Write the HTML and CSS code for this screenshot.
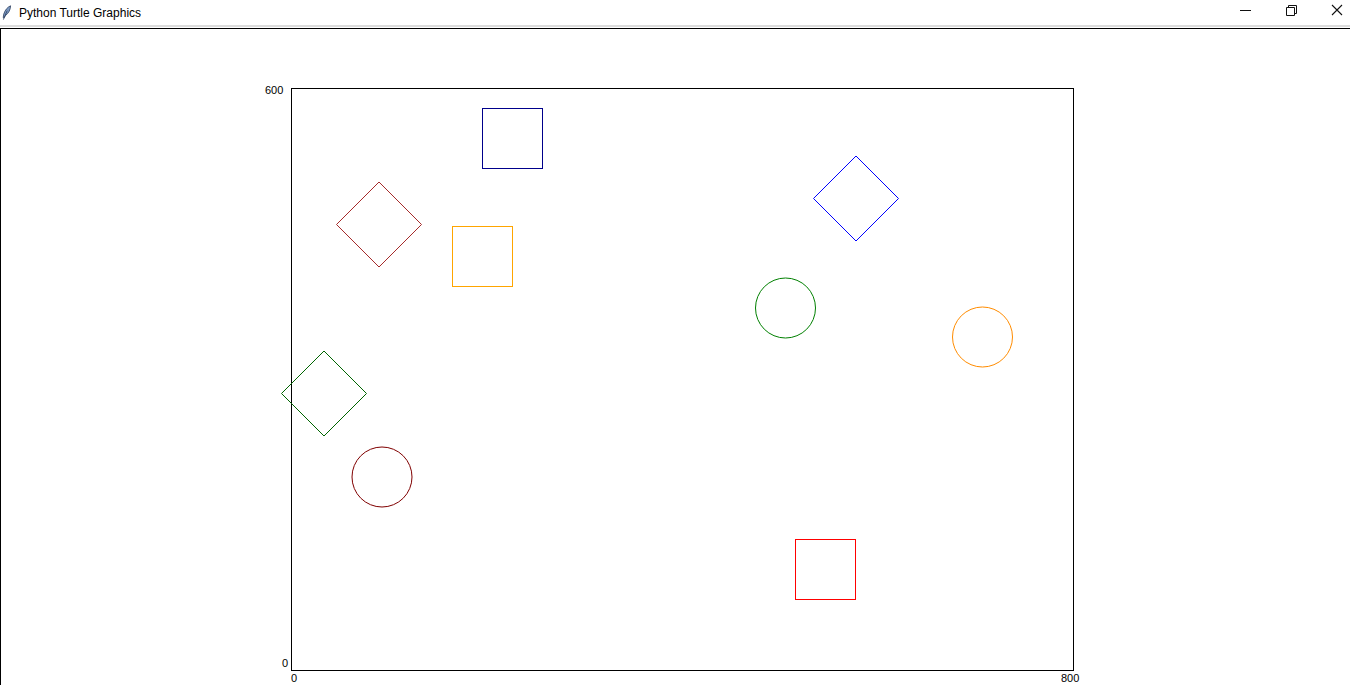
FILE: index.html
```html
<html>
<head>
	<link rel="stylesheet" href="styles.css">
	<title>Python Turtle Graphics</title>
</head>
<body>
	<div id="window">
		<div id="titlebar">
			<svg id="feather" width="10" height="16" viewBox="0 0 10 16">
				<path d="M8.6 0.8 C5.6 2 3 5 1.8 9 L1.2 12.6 L1.8 13 L3.6 10.4 C6.4 8.4 8.4 5 8.6 0.8 Z" fill="#7d9ac4" stroke="#2a3c5c" stroke-width="0.8"/>
				<path d="M1.4 14.6 L5.2 5.6" stroke="#2a3c5c" stroke-width="0.8"/>
			</svg>
			<span id="title">Python Turtle Graphics</span>
			<div id="controls">
				<svg class="ctl" width="46" height="25" viewBox="0 0 46 25"><path d="M29 10.5 H40" stroke="#111" stroke-width="1"/></svg>
				<svg class="ctl" width="46" height="25" viewBox="0 0 46 25">
					<path d="M29.5 7.5 H37.5 V15.5 H29.5 Z" fill="none" stroke="#111"/>
					<path d="M31.5 7.5 V5.5 H39.5 V13.5 H37.5" fill="none" stroke="#111"/>
				</svg>
				<svg class="ctl" width="46" height="25" viewBox="0 0 46 25"><path d="M29 5 L39 15 M39 5 L29 15" stroke="#111" stroke-width="1.1"/></svg>
			</div>
		</div>
		<div id="canvas">
			<svg id="screen" width="1349" height="656" viewBox="1 29 1349 656">
				<rect x="291.5" y="88.5" width="782" height="582" fill="none" stroke="#000" stroke-width="1"/>
				<text class="lbl" x="265" y="94">600</text>
				<text class="lbl" x="282" y="667">0</text>
				<text class="lbl" x="291" y="682">0</text>
				<text class="lbl" x="1061" y="682">800</text>

				<rect x="482.5" y="108.5" width="60" height="60" fill="none" stroke="#00008b"/>
				<rect x="452.5" y="226.5" width="60" height="60" fill="none" stroke="#ffa500"/>
				<rect x="795.5" y="539.5" width="60" height="60" fill="none" stroke="#ff0000"/>

				<polygon points="379,182 421.5,224.5 379,267 336.5,224.5" fill="none" stroke="#a52a2a"/>
				<polygon points="856,156 898.5,198.5 856,241 813.5,198.5" fill="none" stroke="#0000ff"/>
				<polygon points="324,351 366.5,393.5 324,436 281.5,393.5" fill="none" stroke="#006400"/>

				<circle cx="785.5" cy="308" r="30" fill="none" stroke="#008000"/>
				<circle cx="982.5" cy="337" r="30" fill="none" stroke="#ff8c00"/>
				<circle cx="382" cy="477" r="30" fill="none" stroke="#800000"/>
			</svg>
		</div>
	</div>
</body>
</html>
```
FILE: styles.css
```css
html,body{
	margin: 0;
	padding: 0;
	background-color: #fff;
	overflow: hidden;
}
#window{
	width: 1350px;
	height: 685px;
	display: flex;
	flex-direction: column;
	font-family: "Liberation Sans", Arial, sans-serif;
}
#titlebar{
	height: 25px;
	display: flex;
	align-items: center;
	border-bottom: 2px solid #dcdcdc;
	margin-bottom: 1px;
	flex-shrink: 0;
}
#feather{
	margin-left: 2px;
	margin-right: 7px;
}
#title{
	font-size: 12px;
	color: #000;
	flex: 1;
}
#controls{
	display: flex;
	align-self: flex-start;
	margin-right: 1px;
}
.ctl{
	display: block;
}
#canvas{
	flex: 1;
	border-top: 1px solid #000;
	border-left: 1px solid #000;
	overflow: hidden;
}
#screen{
	display: block;
}
.lbl{
	font-family: "Liberation Sans", Arial, sans-serif;
	font-size: 11px;
	fill: #000;
}
```
